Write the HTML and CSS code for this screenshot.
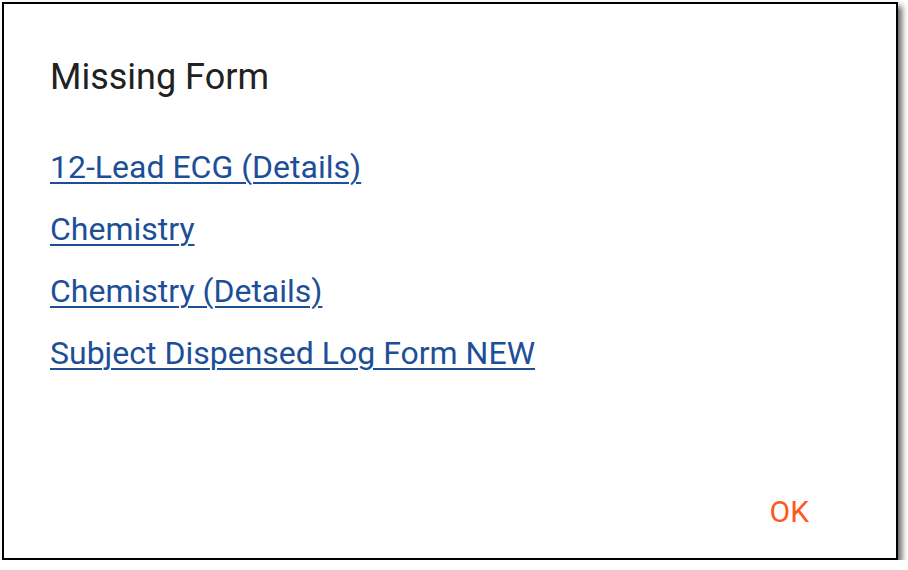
FILE: index.html
```html
<!DOCTYPE html>
<html>
<head>
<meta charset="utf-8">
<link rel="stylesheet" href="styles.css">
</head>
<body>
<div class="dialog">
  <h2 class="title">Missing Form</h2>
  <div class="links">
    <a href="#" class="link">12-Lead ECG (Details)</a>
    <a href="#" class="link">Chemistry</a>
    <a href="#" class="link">Chemistry (Details)</a>
    <a href="#" class="link">Subject Dispensed Log Form NEW</a>
  </div>
  <div class="actions">
    <button class="ok">OK</button>
  </div>
</div>
</body>
</html>
```
FILE: styles.css
```css
html, body {
  margin: 0;
  padding: 0;
  background: #ffffff;
}
body {
  font-family: Roboto, "Liberation Sans", sans-serif;
}
.dialog {
  box-sizing: border-box;
  margin: 2px 0 0 2px;
  width: 896px;
  height: 558px;
  border: 2px solid #000;
  background: #fff;
  box-shadow: 4px 4px 6px rgba(0,0,0,0.6);
  padding: 50px 46px 0 46px;
  display: flex;
  flex-direction: column;
}
.title {
  margin: 0;
  font-size: 36px;
  font-weight: 400;
  line-height: 46px;
  color: #212121;
}
.links {
  display: flex;
  flex-direction: column;
  gap: 22px;
  margin-top: 47px;
}
.link {
  font-size: 32px;
  line-height: 40px;
  color: #1d4f98;
  text-decoration: underline;
  text-decoration-thickness: 2px;
  text-underline-offset: 4px;
  align-self: flex-start;
}
.actions {
  margin-top: auto;
  display: flex;
  justify-content: flex-end;
  padding: 0 25px 20px 0;
}
.ok {
  font-family: Roboto, "Liberation Sans", sans-serif;
  font-size: 30px;
  line-height: 36px;
  color: #ff5722;
  background: none;
  border: none;
  padding: 8px 16px;
}
```
